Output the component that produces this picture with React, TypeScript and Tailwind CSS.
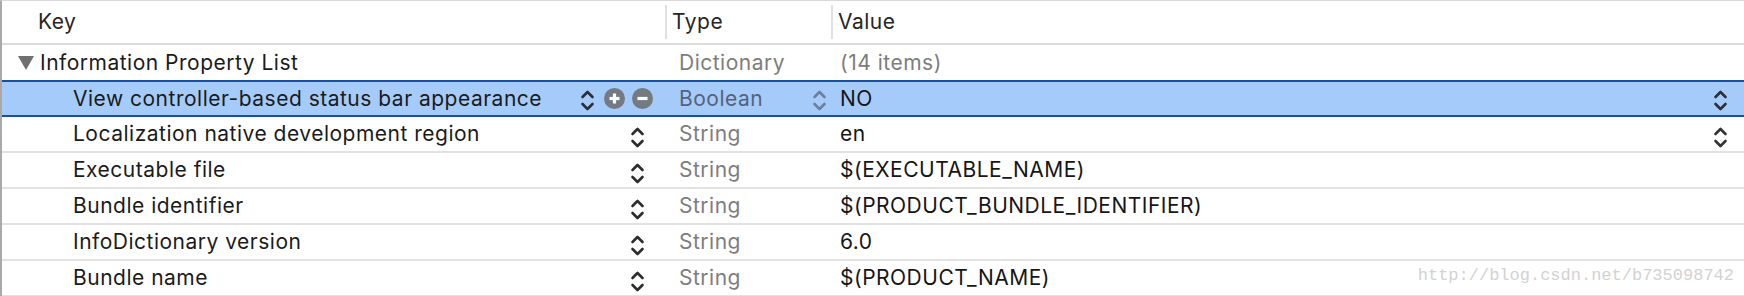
import React from "react";

type Row = {
  key: string;
  type: string;
  value: string;
  level: number;
  selected?: boolean;
  valueChevron?: boolean;
};

const rows: Row[] = [
  { key: "Information Property List", type: "Dictionary", value: "(14 items)", level: 0 },
  { key: "View controller-based status bar appearance", type: "Boolean", value: "NO", level: 1, selected: true, valueChevron: true },
  { key: "Localization native development region", type: "String", value: "en", level: 1, valueChevron: true },
  { key: "Executable file", type: "String", value: "$(EXECUTABLE_NAME)", level: 1 },
  { key: "Bundle identifier", type: "String", value: "$(PRODUCT_BUNDLE_IDENTIFIER)", level: 1 },
  { key: "InfoDictionary version", type: "String", value: "6.0", level: 1 },
  { key: "Bundle name", type: "String", value: "$(PRODUCT_NAME)", level: 1 },
];

function Stepper({ className = "" }: { className?: string }) {
  return (
    <svg width="15" height="23" viewBox="0 0 15 23" className={className} fill="none" stroke="currentColor" strokeWidth="2.6" strokeLinecap="round" strokeLinejoin="round">
      <path d="M2.5 8 L7.5 3 L12.5 8" />
      <path d="M2.5 15 L7.5 20 L12.5 15" />
    </svg>
  );
}

function RoundButton({ minus }: { minus?: boolean }) {
  return (
    <svg width="21" height="21" viewBox="0 0 21 21">
      <circle cx="10.5" cy="10.5" r="10.5" fill="#747a82" />
      <path d="M5.5 10.5 H15.5" stroke="#fff" strokeWidth="3.2" />
      {!minus && <path d="M10.5 5.5 V15.5" stroke="#fff" strokeWidth="3.2" />}
    </svg>
  );
}

export default function App() {
  return (
    <div className="w-[1744px] h-[296px] overflow-hidden bg-white border-l-2 border-t border-[#a9a9a9] border-t-[#d9d9d9] text-[21px] tracking-[0.5px] text-[#1b1b1b] font-['Inter',sans-serif] relative">
      {/* Header */}
      <div className="flex h-[44px] border-b-2 border-[#dcdcdc] text-[#262626]">
        <div className="w-[663px] pl-[36px] flex items-center">Key</div>
        <div className="w-[166px] pl-[5px] flex items-center border-l-2 border-[#e0e0e0] my-[4px]">Type</div>
        <div className="flex-1 pl-[5px] flex items-center border-l-2 border-[#e0e0e0] my-[4px]">Value</div>
      </div>

      {rows.map((r, i) => {
        const base = r.selected
          ? "bg-[#a5cbfa] border-y-2 border-[#1a4fa0] h-[37px]"
          : i === 0
          ? "h-[35px]"
          : "border-b-2 border-[#e2e2e2] h-[36px]";
        return (
          <div key={i} className={`flex items-center ${base}`}>
            {/* Key */}
            <div className="w-[663px] h-full flex items-center">
              {r.level === 0 ? (
                <>
                  <svg width="16" height="14" viewBox="0 0 16 14" className="ml-[16px] mr-[6px]">
                    <path d="M0 0 H16 L8 14 Z" fill="#6f6f6f" />
                  </svg>
                  <span>{r.key}</span>
                </>
              ) : (
                <>
                  <span className="pl-[71px] flex-1">{r.key}</span>
                  {r.selected ? (
                    <div className="flex items-center mr-[12px] mt-[4px]">
                      <Stepper className="text-[#2a2f38] mr-[9px]" />
                      <div className="flex items-center gap-[7px] -mt-[4px]">
                        <RoundButton />
                        <RoundButton minus />
                      </div>
                    </div>
                  ) : (
                    <Stepper className="text-[#2d2d2d] mr-[20px] mt-[6px]" />
                  )}
                </>
              )}
            </div>
            {/* Type */}
            <div className={`w-[168px] h-full flex items-center pl-[14px] ${r.selected ? "text-[#56627a]" : "text-[#7d7d7d]"}`}>
              <span className="flex-1">{r.type}</span>
              {r.selected && <Stepper className="text-[#6d7f9e] mr-[6px] mt-[4px]" />}
            </div>
            {/* Value */}
            <div className={`flex-1 h-full flex items-center pl-[7px] ${i === 0 ? "text-[#7d7d7d]" : "text-[#161616]"}`}>
              <span className="flex-1">{r.value}</span>
              {r.valueChevron && !r.selected && <Stepper className="text-[#333] mr-[16px] mt-[6px]" />}
              {r.selected && <Stepper className="text-[#2a2f38] mr-[16px] mt-[4px]" />}
            </div>
          </div>
        );
      })}

      <div className="absolute right-[10px] bottom-[12px] font-['Liberation_Mono',monospace] text-[17px] tracking-normal text-[#d2d2d2] leading-none">
        http://blog.csdn.net/b735098742
      </div>
    </div>
  );
}
